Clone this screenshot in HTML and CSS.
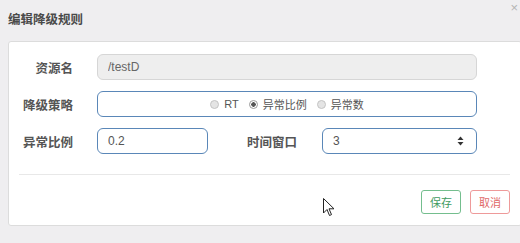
FILE: index.html
```html
<!DOCTYPE html>
<html lang="zh-CN">
<head>
    <meta charset="UTF-8">
    <title>编辑降级规则</title>
    <link rel="stylesheet" href="styles.css">
</head>
<body>

<div class="dialog">
    <div class="dialog-head">
        <h1>编辑降级规则</h1>
        <span class="close">×</span>
    </div>

    <div class="panel">
        <div class="row">
            <label class="label">资源名</label>
            <input class="field field-wide" type="text" value="/testD" disabled>
        </div>

        <div class="row">
            <label class="label">降级策略</label>
            <div class="field field-wide radios">
                <span class="radio"><i class="dot"></i>RT</span>
                <span class="radio"><i class="dot checked"></i>异常比例</span>
                <span class="radio"><i class="dot"></i>异常数</span>
            </div>
        </div>

        <div class="row">
            <label class="label">异常比例</label>
            <input class="field field-small" type="text" value="0.2">
            <label class="label label-second">时间窗口</label>
            <span class="spin-wrap">
                <input class="field field-mid" type="text" value="3">
                <svg class="spinner" width="7" height="10" viewBox="0 0 7 10">
                    <path d="M3.5 0.5 L6.5 4 L0.5 4 Z" fill="#333"/>
                    <path d="M3.5 9.5 L6.5 6 L0.5 6 Z" fill="#333"/>
                </svg>
            </span>
        </div>

        <hr class="divider">

        <div class="actions">
            <button class="btn btn-save">保存</button>
            <button class="btn btn-cancel">取消</button>
        </div>
    </div>
</div>

<svg class="cursor" width="12" height="19" viewBox="0 0 12 19">
    <path d="M0.5 0.5 L0.5 15 L4 11.5 L6.5 17.5 L8.5 16.6 L6 10.8 L11 10.8 Z" fill="#fff" stroke="#222" stroke-width="1"/>
</svg>

</body>
</html>
```

FILE: styles.css
```css
body {
    margin: 0;
    padding: 0;
    background: #efeef0;
    font-family: "Liberation Sans", "Noto Sans CJK SC", sans-serif;
    color: #555;
    overflow: hidden;
    position: relative;
    height: 243px;
}

.dialog {
    width: 514px;
    margin-left: 8px;
}

.dialog-head {
    display: flex;
    justify-content: space-between;
    align-items: flex-start;
    height: 41px;
}

h1 {
    margin: 0;
    padding-top: 9px;
    font-size: 12.5px;
    font-weight: bold;
    color: #4a4a4a;
    font-family: "Noto Sans CJK SC", sans-serif;
}

.close {
    font-size: 13px;
    line-height: 13px;
    color: #b5b5b5;
    margin-top: 1px;
    margin-right: 4px;
}

.panel {
    box-sizing: border-box;
    background: #fff;
    border: 1px solid #dcdcdc;
    border-radius: 3px;
    height: 185px;
    padding-top: 12px;
}

.row {
    display: flex;
    align-items: center;
    margin-bottom: 11px;
}

.label {
    box-sizing: border-box;
    width: 64px;
    margin-right: 24px;
    text-align: right;
    font-size: 12.5px;
    font-weight: bold;
    color: #555;
    font-family: "Noto Sans CJK SC", sans-serif;
}

.label-second {
    width: 89px;
    margin-right: 25px;
}

.field {
    box-sizing: border-box;
    height: 26px;
    padding: 0 10px;
    border: 1px solid #5a87b8;
    border-radius: 6px;
    background: #fff;
    font-family: "Liberation Sans", "Noto Sans CJK SC", sans-serif;
    font-size: 12px;
    color: #555;
    outline: none;
}

.field-wide {
    width: 380px;
}

.field-small {
    width: 111px;
}

.field-mid {
    width: 155px;
}

.field:disabled {
    background: #eeeeee;
    border-color: #d6d6d6;
    color: #666;
}

.radios {
    display: flex;
    justify-content: center;
    align-items: center;
    gap: 10px;
    font-size: 11px;
    color: #555;
    font-family: "Liberation Sans", "Noto Sans CJK SC", sans-serif;
}

.radio {
    display: flex;
    align-items: center;
}

.dot {
    box-sizing: border-box;
    display: inline-block;
    width: 9px;
    height: 9px;
    border: 1px solid #c4c4c4;
    border-radius: 50%;
    background: #e4e4e4;
    margin-right: 5px;
}

.dot.checked {
    background: #fff radial-gradient(circle, #555 0, #555 2px, transparent 2.5px);
    border-color: #999;
}

.spin-wrap {
    position: relative;
    display: inline-block;
    height: 26px;
}

.spinner {
    position: absolute;
    right: 13px;
    top: 8px;
}

.divider {
    border: 0;
    border-top: 1px solid #e8e8e8;
    margin: 20px 11px 0 10px;
}

.actions {
    display: flex;
    justify-content: flex-end;
    gap: 9px;
    margin: 15px 11px 0 0;
}

.btn {
    box-sizing: border-box;
    width: 40px;
    height: 24px;
    padding: 0;
    background: #fff;
    border-radius: 3px;
    font-size: 11px;
    font-family: "Noto Sans CJK SC", sans-serif;
}

.btn-save {
    border: 1px solid #74be8e;
    color: #3f9b5f;
}

.btn-cancel {
    border: 1px solid #ee9a9a;
    color: #e06868;
}

.cursor {
    position: absolute;
    left: 323px;
    top: 198px;
}
```
